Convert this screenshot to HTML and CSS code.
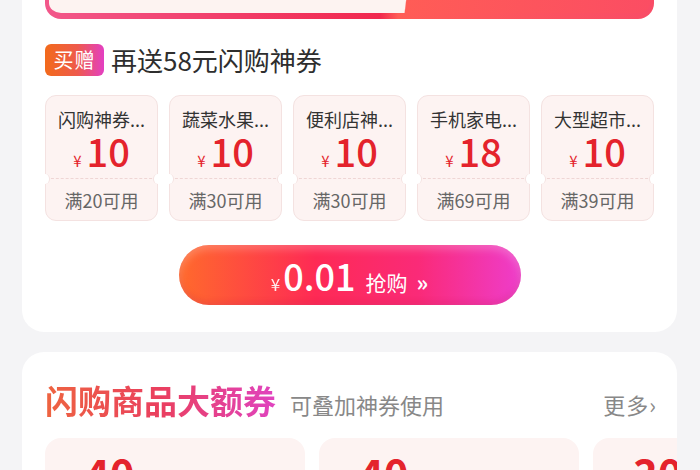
FILE: index.html
```html
<!DOCTYPE html>
<html lang="zh-CN">
<head>
    <meta charset="UTF-8">
    <meta name="viewport" content="width=device-width, initial-scale=1.0">
    <title>闪购神券</title>
    <link rel="stylesheet" href="styles.css">
</head>
<body>
    <div class="page">
        <!-- Gift coupon pack -->
        <div class="card gift-card">
            <div class="banner"></div>

            <div class="gift-head">
                <span class="badge">买赠</span>
                <span class="gift-title">再送58元闪购神券</span>
            </div>

            <div class="coupon-row">
                <div class="coupon">
                    <div class="coupon-top">
                        <div class="coupon-name">闪购神券...</div>
                        <div class="coupon-price"><span class="yen">¥</span>10</div>
                    </div>
                    <div class="coupon-bottom">满20可用</div>
                </div>
                <div class="coupon">
                    <div class="coupon-top">
                        <div class="coupon-name">蔬菜水果...</div>
                        <div class="coupon-price"><span class="yen">¥</span>10</div>
                    </div>
                    <div class="coupon-bottom">满30可用</div>
                </div>
                <div class="coupon">
                    <div class="coupon-top">
                        <div class="coupon-name">便利店神...</div>
                        <div class="coupon-price"><span class="yen">¥</span>10</div>
                    </div>
                    <div class="coupon-bottom">满30可用</div>
                </div>
                <div class="coupon">
                    <div class="coupon-top">
                        <div class="coupon-name">手机家电...</div>
                        <div class="coupon-price"><span class="yen">¥</span>18</div>
                    </div>
                    <div class="coupon-bottom">满69可用</div>
                </div>
                <div class="coupon">
                    <div class="coupon-top">
                        <div class="coupon-name">大型超市...</div>
                        <div class="coupon-price"><span class="yen">¥</span>10</div>
                    </div>
                    <div class="coupon-bottom">满39可用</div>
                </div>
            </div>

            <button class="buy-btn" type="button">
                <span class="btn-yen">¥</span><span class="btn-price">0.01</span><span class="btn-text">抢购</span><span class="btn-arrow">»</span>
            </button>
        </div>

        <!-- Big coupons for flash goods -->
        <div class="card big-card">
            <div class="big-head">
                <span class="big-title">闪购商品大额券</span>
                <span class="big-sub">可叠加神券使用</span>
                <a class="more" href="#">更多›</a>
            </div>
            <div class="big-row">
                <div class="big-coupon">
                    <span class="big-yen">¥</span><span class="big-price">40</span><span class="big-cond">满99可用</span>
                </div>
                <div class="big-coupon">
                    <span class="big-yen">¥</span><span class="big-price">40</span><span class="big-cond">满199可用</span>
                </div>
                <div class="big-coupon">
                    <span class="big-yen">¥</span><span class="big-price">30</span><span class="big-cond">满99可用</span>
                </div>
            </div>
        </div>
    </div>
</body>
</html>
```

FILE: styles.css
```css
/* Flash sale coupon page */
body {
    margin: 0;
    background-color: #f4f4f6;
    font-family: "Noto Sans CJK SC", "Noto Sans", sans-serif;
    color: #333;
    height: 470px;
    overflow: hidden;
}
.page {
    padding: 0 23px 0 22px;
}
.card {
    background-color: #fff;
    border-radius: 22px;
}
.gift-card {
    margin-top: -44px;
    padding: 0 23px 27px;
    border-radius: 0 0 22px 22px;
}
.banner {
    height: 53px;
    border: 4px solid transparent;
    border-bottom-width: 6px;
    border-radius: 0 0 16px 16px;
    background:
        linear-gradient(97deg, #fdf3f1 59.5%, #ff5c56 59.7%, #fb4d63 100%) padding-box,
        linear-gradient(90deg, #f2578a, #f1284e 55%, #ff5c56 58%, #f94c66 100%) border-box;
}
.gift-head {
    display: flex;
    align-items: center;
    gap: 7px;
    margin-top: 25px;
    height: 32px;
}
.badge {
    width: 59px;
    height: 32px;
    line-height: 32px;
    text-align: center;
    border-radius: 6px;
    background: linear-gradient(90deg, #f26a1b, #ee5a4c 55%, #e33fc2);
    color: #fff;
    font-size: 20px;
    letter-spacing: 1px;
}
.gift-title {
    font-size: 26px;
    line-height: 32px;
    color: #2e2e2e;
}
.coupon-row {
    display: flex;
    gap: 11px;
    margin-top: 19px;
}
.coupon {
    width: 113px;
    height: 126px;
    box-sizing: border-box;
    background-color: #fdf3f2;
    border: 1px solid #f4e2e1;
    border-radius: 11px;
    text-align: center;
}
.coupon-top {
    height: 82px;
    box-sizing: border-box;
    padding-top: 12px;
}
.coupon-name {
    font-size: 18px;
    line-height: 22px;
    color: #333;
    white-space: nowrap;
}
.coupon-price {
    margin-top: 2px;
    font-size: 38px;
    line-height: 38px;
    font-weight: 500;
    color: #e4232c;
}
.yen {
    font-size: 15px;
    margin-right: 5px;
    font-weight: 400;
}
.coupon-bottom {
    position: relative;
    height: 42px;
    line-height: 42px;
    border-top: 1px dashed #efd6d5;
    font-size: 18px;
    color: #666;
}
.coupon-bottom::before,
.coupon-bottom::after {
    content: "";
    position: absolute;
    top: -5px;
    width: 8px;
    height: 10px;
    border-radius: 50%;
    background-color: #fff;
}
.coupon-bottom::before {
    left: -5px;
    border-right: 1px solid #f4e2e1;
}
.coupon-bottom::after {
    right: -5px;
    border-left: 1px solid #f4e2e1;
}
.buy-btn {
    display: flex;
    align-items: baseline;
    justify-content: center;
    width: 342px;
    height: 60px;
    margin: 24px auto 0;
    padding: 0;
    border: none;
    border-radius: 30px;
    background: linear-gradient(90deg, #ff6a2c, #fe2a55 40%, #fa2a78 70%, #ee3dcb);
    box-shadow: inset 0 4px 8px rgba(255, 255, 255, 0.25), inset 0 -3px 6px rgba(180, 0, 60, 0.2);
    color: #fff;
    font-family: inherit;
    line-height: 60px;
    cursor: pointer;
}
.btn-yen {
    font-size: 17px;
    margin-right: 3px;
    opacity: 0.9;
}
.btn-price {
    font-size: 36px;
    font-weight: 500;
    margin-right: 10px;
}
.btn-text {
    font-size: 21px;
    margin-right: 9px;
}
.btn-arrow {
    font-size: 22px;
    font-weight: 700;
}
.big-card {
    margin-top: 20px;
    padding: 25px 0 0 23px;
    height: 200px;
    overflow: hidden;
}
.big-head {
    display: flex;
    align-items: baseline;
    padding-right: 20px;
}
.big-title {
    font-size: 33px;
    line-height: 46px;
    font-weight: 700;
    background: linear-gradient(90deg, #ee6440, #ea3f5f 50%, #e043c0);
    -webkit-background-clip: text;
    background-clip: text;
    color: transparent;
}
.big-sub {
    margin-left: 14px;
    font-size: 22px;
    color: #888;
}
.more {
    margin-left: auto;
    font-size: 22px;
    color: #888;
    text-decoration: none;
    letter-spacing: 1px;
}
.big-row {
    display: flex;
    gap: 14px;
    margin-top: 15px;
}
.big-coupon {
    flex: 0 0 260px;
    height: 120px;
    box-sizing: border-box;
    padding: 4px 0 0 28px;
    background-color: #fdf3f2;
    border-radius: 16px;
    color: #e4232c;
}
.big-yen {
    font-size: 16px;
    margin-right: 3px;
}
.big-price {
    font-size: 42px;
    font-weight: 700;
    margin-right: 12px;
}
.big-cond {
    font-size: 20px;
}
```
